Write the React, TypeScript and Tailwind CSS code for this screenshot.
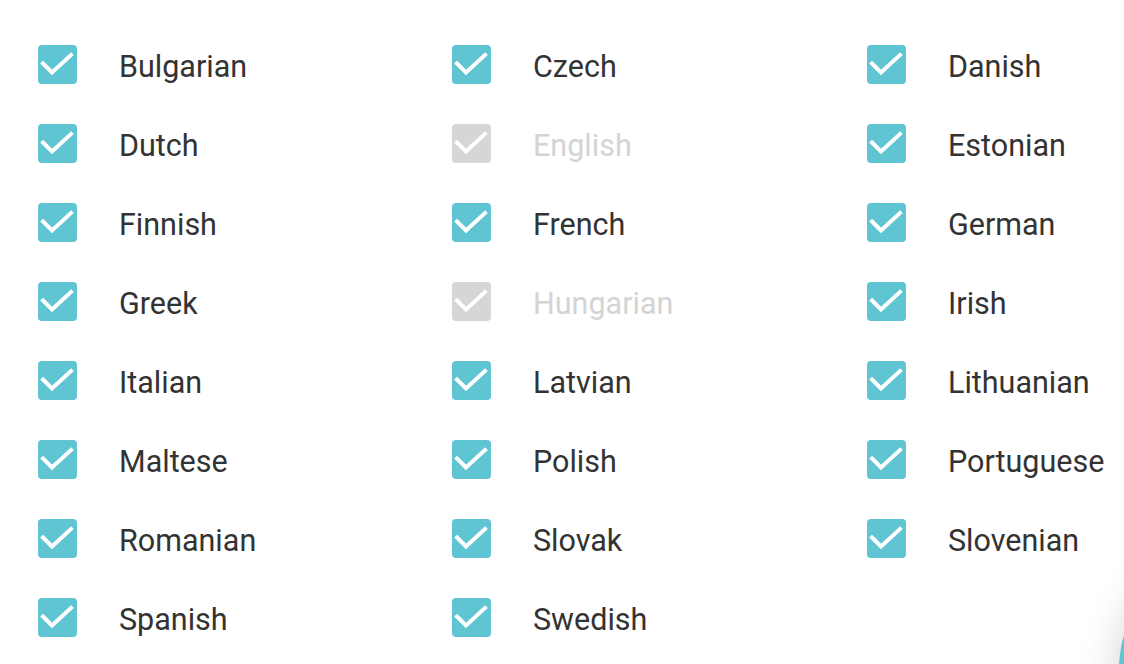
import React from "react";

const langs: { name: string; disabled?: boolean }[] = [
  { name: "Bulgarian" }, { name: "Czech" }, { name: "Danish" },
  { name: "Dutch" }, { name: "English", disabled: true }, { name: "Estonian" },
  { name: "Finnish" }, { name: "French" }, { name: "German" },
  { name: "Greek" }, { name: "Hungarian", disabled: true }, { name: "Irish" },
  { name: "Italian" }, { name: "Latvian" }, { name: "Lithuanian" },
  { name: "Maltese" }, { name: "Polish" }, { name: "Portuguese" },
  { name: "Romanian" }, { name: "Slovak" }, { name: "Slovenian" },
  { name: "Spanish" }, { name: "Swedish" },
];

function Box({ disabled }: { disabled?: boolean }) {
  return (
    <div
      className={
        "w-[39px] h-[39px] rounded-[4px] flex items-center justify-center shrink-0 " +
        (disabled ? "bg-[#d6d6d6]" : "bg-[#5fc5d3]")
      }
    >
      <svg width="39" height="39" viewBox="0 0 39 39">
        <polyline
          points="5,18.5 14,27.5 33,10"
          fill="none"
          stroke="white"
          strokeWidth="4"
          strokeLinecap="square"
        />
      </svg>
    </div>
  );
}

export default function App() {
  return (
    <div
      className="relative w-[1124px] h-[664px] overflow-hidden bg-white"
      style={{ fontFamily: "Roboto, 'Liberation Sans', sans-serif" }}
    >
      <div className="grid grid-cols-[414px_415px_1fr] pl-[38px] pt-[25px]">
        {langs.map((l) => (
          <div key={l.name} className="h-[79px] flex items-center gap-[42px]">
            <Box disabled={l.disabled} />
            <span
              className={
                "text-[30.5px] leading-none pt-[6px] " +
                (l.disabled ? "text-[#d4d4d4]" : "text-[#333333]")
              }
            >
              {l.name}
            </span>
          </div>
        ))}
      </div>
      <div className="absolute left-[1119px] top-[549px] w-[241px] h-[241px] rounded-full bg-[#5fc5d3] shadow-[0_0_40px_rgba(0,0,0,0.18)]" />
    </div>
  );
}
